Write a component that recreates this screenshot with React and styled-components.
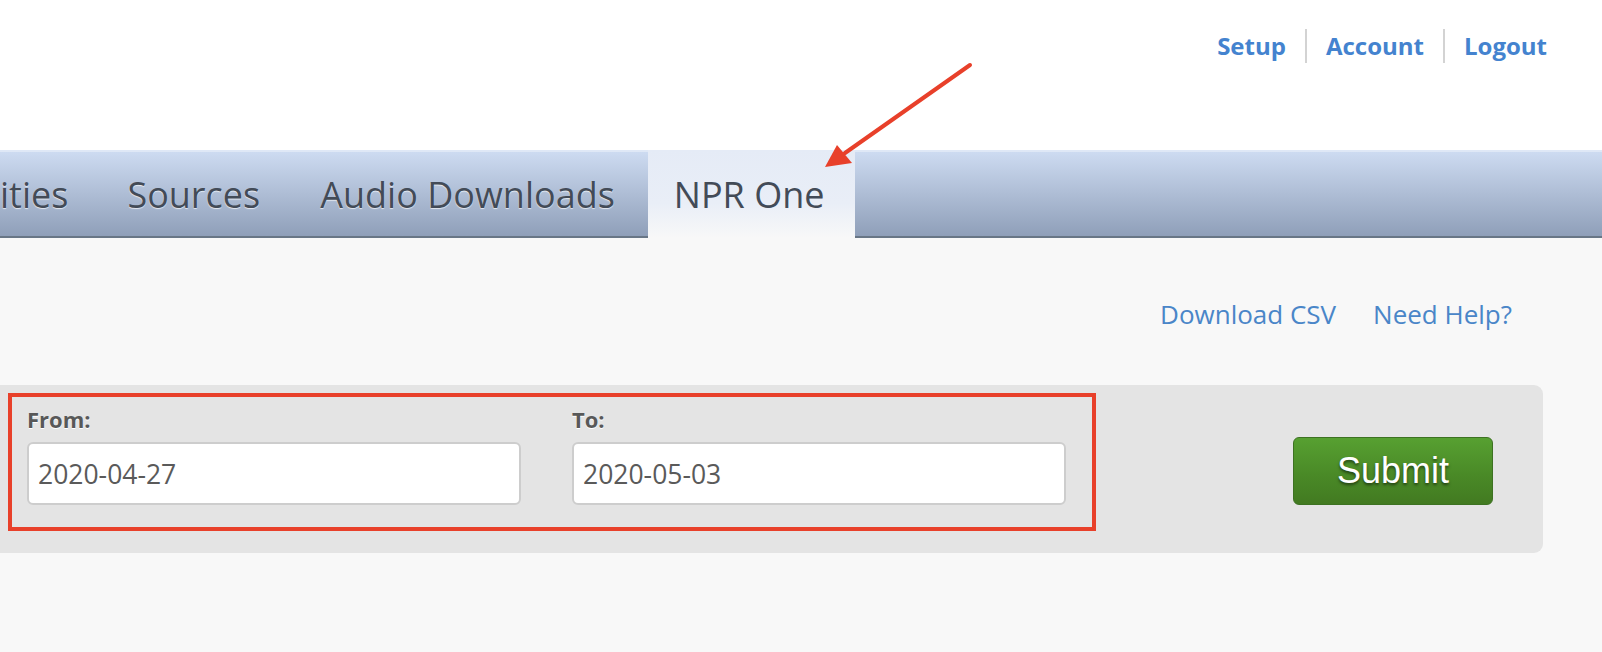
import React from 'react';
import styled, { createGlobalStyle } from 'styled-components';

const GlobalStyle = createGlobalStyle`
  body {
    margin: 0;
    background: #f8f8f8;
    font-family: "Open Sans", "Liberation Sans", sans-serif;
    overflow: hidden;
  }
`;

const Page = styled.div`
  position: relative;
  width: 1602px;
  height: 652px;
  overflow: hidden;
`;

const Header = styled.header`
  height: 150px;
  background: #fff;
  display: flex;
  justify-content: flex-end;
  align-items: flex-start;
  padding: 29px 55px 0 0;
  box-sizing: border-box;
`;

const UserLink = styled.a`
  font-size: 24px;
  font-weight: 700;
  line-height: 34px;
  color: #4483cf;
  text-decoration: none;
  padding: 0 19px;
  border-left: 2px solid #d3d3d3;

  &:first-child {
    border-left: none;
  }

  &:last-child {
    padding-right: 0;
  }
`;

const TabBar = styled.nav`
  height: 84px;
  border-top: 2px solid #dfe8f6;
  border-bottom: 2px solid #687686;
  background: linear-gradient(#cddbf1, #8f9fb9);
  display: flex;
  align-items: stretch;
`;

const Tab = styled.a`
  display: flex;
  align-items: center;
  padding: ${(p) => (p.$cut ? '0 29px 0 0' : '0 30px')};
  font-size: 36px;
  color: #434b57;
  text-shadow: ${(p) => (p.$active ? 'none' : '0 1px 1px rgba(255, 255, 255, 0.7)')};
  text-decoration: none;
  white-space: nowrap;
  ${(p) =>
    p.$active &&
    `
    margin: -2px 0 -2px 3px;
    padding: 0 30px 0 26px;
    background: linear-gradient(#e5ebf6, #e9eef7 60%, #f8f8f8);
  `}
`;

const Content = styled.main`
  padding-top: 58px;
`;

const LinkRow = styled.div`
  display: flex;
  justify-content: flex-end;
  gap: 37px;
  padding-right: 90px;
  line-height: 36px;
`;

const HelpLink = styled.a`
  font-size: 26px;
  color: #4a86c8;
  text-decoration: none;
`;

const Panel = styled.form`
  margin-top: 53px;
  width: 1543px;
  height: 168px;
  box-sizing: border-box;
  background: #e4e4e4;
  border-radius: 0 9px 9px 0;
  display: flex;
  align-items: flex-start;
  justify-content: space-between;
  padding: 8px 50px 0 8px;
`;

const Highlight = styled.div`
  border: 4px solid #e8402a;
  display: grid;
  grid-template-columns: 494px 494px;
  column-gap: 51px;
  padding: 7px 26px 22px 15px;
`;

const Field = styled.label`
  display: flex;
  flex-direction: column;
  gap: 8px;
`;

const FieldLabel = styled.span`
  font-size: 22px;
  font-weight: 700;
  line-height: 30px;
  color: #585858;
  text-shadow: 0 1px 0 #fff;
`;

const DateInput = styled.input`
  box-sizing: border-box;
  width: 494px;
  height: 63px;
  border: 2px solid #cdcdcd;
  border-radius: 6px;
  background: #fff;
  padding: 0 9px;
  font-family: "Open Sans", sans-serif;
  font-size: 26.5px;
  color: #5a5a5a;
  outline: none;
`;

const SubmitButton = styled.button`
  margin-top: 44px;
  width: 200px;
  height: 68px;
  border: 1px solid #3d7222;
  border-radius: 6px;
  background: linear-gradient(#57a031, #4a8a27 55%, #427a21);
  color: #fff;
  font-family: "Liberation Sans", Arial, sans-serif;
  font-size: 36px;
  text-shadow: 0 2px 3px rgba(0, 0, 0, 0.55);
  cursor: pointer;
`;

const Arrow = styled.svg`
  position: absolute;
  left: 815px;
  top: 55px;
  pointer-events: none;
`;

const tabs = ['Sources', 'Audio Downloads'];

export default function App() {
  return (
    <Page>
      <GlobalStyle />
      <Header>
        <UserLink href="#">Setup</UserLink>
        <UserLink href="#">Account</UserLink>
        <UserLink href="#">Logout</UserLink>
      </Header>
      <TabBar>
        <Tab href="#" $cut>ities</Tab>
        {tabs.map((t) => (
          <Tab href="#" key={t}>{t}</Tab>
        ))}
        <Tab href="#" $active>NPR One</Tab>
      </TabBar>
      <Content>
        <LinkRow>
          <HelpLink href="#">Download CSV</HelpLink>
          <HelpLink href="#">Need Help?</HelpLink>
        </LinkRow>
        <Panel onSubmit={(e) => e.preventDefault()}>
          <Highlight>
            <Field>
              <FieldLabel>From:</FieldLabel>
              <DateInput defaultValue="2020-04-27" readOnly />
            </Field>
            <Field>
              <FieldLabel>To:</FieldLabel>
              <DateInput defaultValue="2020-05-03" readOnly />
            </Field>
          </Highlight>
          <SubmitButton type="submit">Submit</SubmitButton>
        </Panel>
      </Content>
      <Arrow width="170" height="125" viewBox="0 0 170 125">
        <line x1="155" y1="10" x2="30" y2="98" stroke="#e8402a" strokeWidth="4" strokeLinecap="round" />
        <polygon points="10,112 22,90 37,108" fill="#e8402a" />
      </Arrow>
    </Page>
  );
}
